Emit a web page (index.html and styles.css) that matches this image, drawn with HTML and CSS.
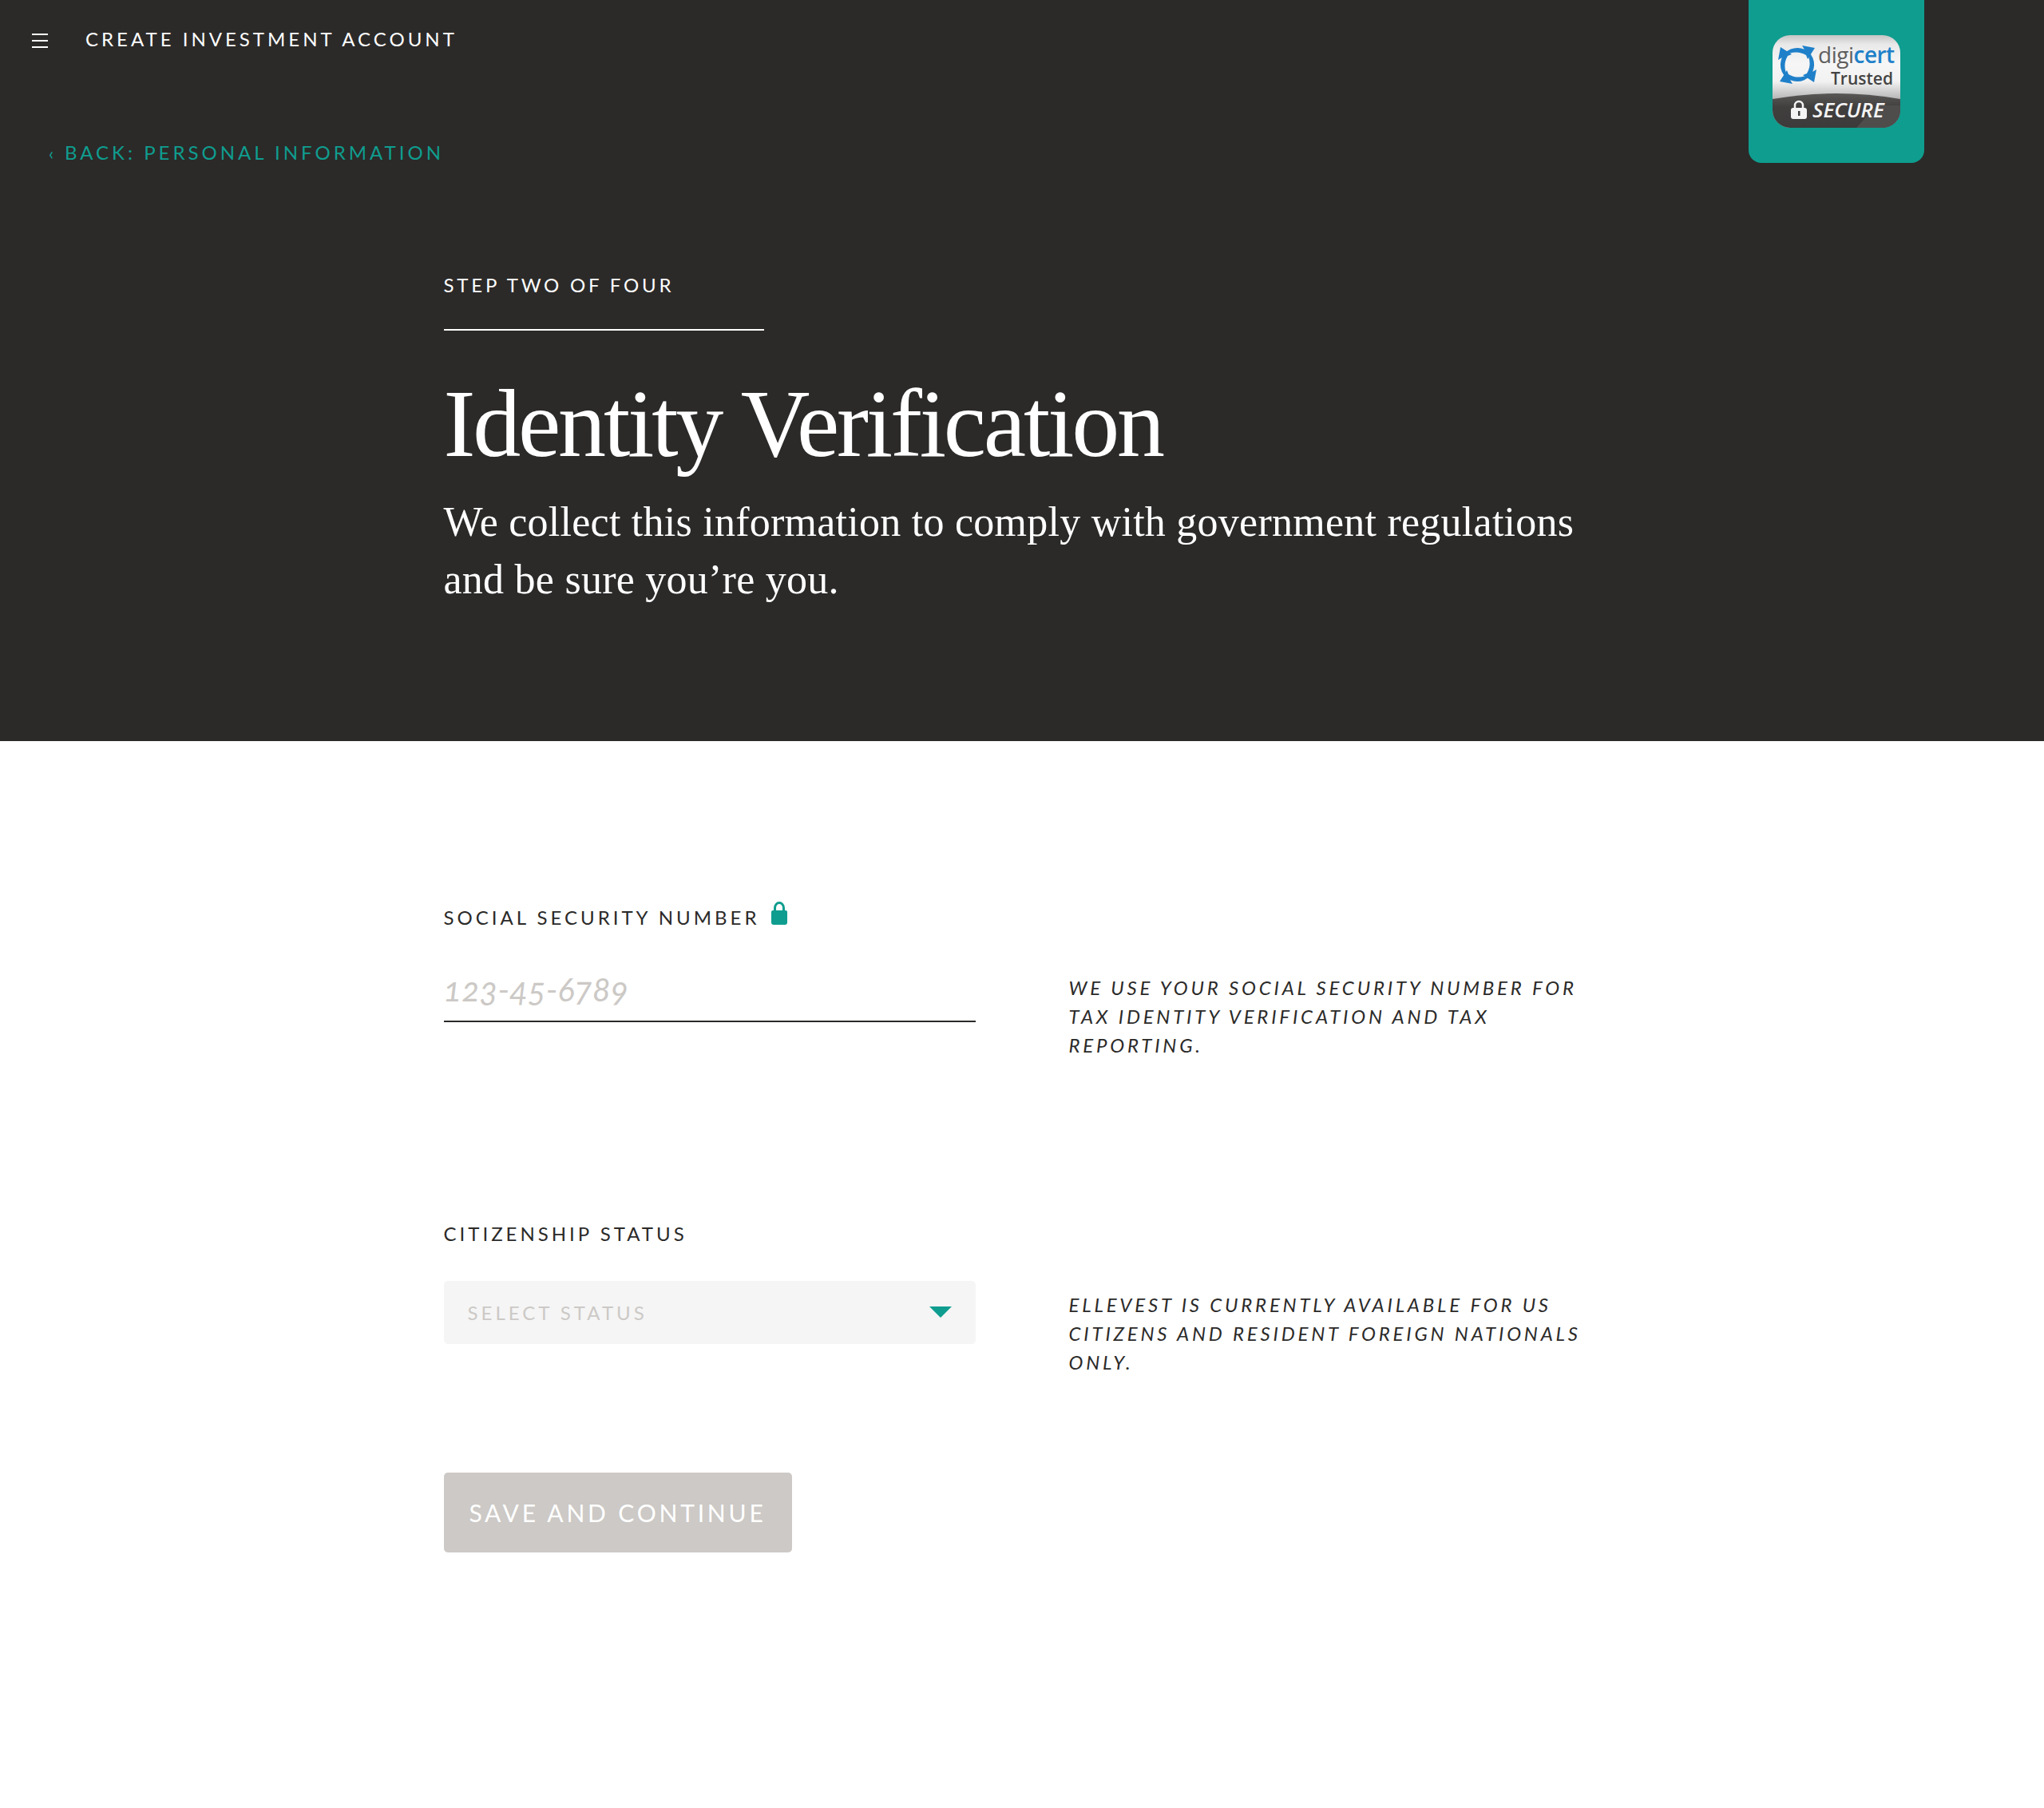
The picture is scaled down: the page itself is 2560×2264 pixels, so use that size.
FILE: index.html
```html
<!DOCTYPE html>
<html lang="en">
<head>
  <meta charset="UTF-8" />
  <title>Create Investment Account</title>
  <link rel="stylesheet" href="styles.css">
</head>
<body>
  <header class="hero">
    <div class="topbar">
      <button class="menu-btn" aria-label="Menu"><span></span><span></span><span></span></button>
      <span class="topbar-title">CREATE INVESTMENT ACCOUNT</span>
    </div>
    <a class="back-link" href="#"><span class="back-arrow">‹</span>BACK: PERSONAL INFORMATION</a>

    <div class="badge">
      <svg class="badge-seal" viewBox="0 0 160 116" width="160" height="116">
        <defs>
          <linearGradient id="sealTop" x1="0" y1="0" x2="0" y2="1">
            <stop offset="0" stop-color="#c4c5c4"/>
            <stop offset="0.1" stop-color="#e9e9e9"/>
            <stop offset="0.3" stop-color="#f6f6f6"/>
            <stop offset="0.5" stop-color="#f2f2f2"/>
            <stop offset="0.68" stop-color="#b9b9b9"/>
          </linearGradient>
          <linearGradient id="sealBand" x1="0" y1="0" x2="0" y2="1">
            <stop offset="0" stop-color="#5a5757"/>
            <stop offset="0.4" stop-color="#413e3e"/>
            <stop offset="1" stop-color="#3c3a3a"/>
          </linearGradient>
          <clipPath id="sealClip"><rect width="160" height="116" rx="22"/></clipPath>
        </defs>
        <g clip-path="url(#sealClip)">
          <rect width="160" height="116" fill="url(#sealTop)"/>
          <path d="M0 80 Q80 66 160 80 V116 H0 Z" fill="url(#sealBand)"/>
          <path d="M105 116 L130 88 H160 V116 Z" fill="#4f4c4c"/>
        </g>
        <g fill="#1f80c9">
          <path id="sealArc" d="M11 30 A21 21 0 0 1 40 18 L37 13 L53 16 L44 30 L42 25 A24 24 0 0 0 11 30 Z"/>
          <use href="#sealArc" transform="rotate(90 31 37)"/>
          <use href="#sealArc" transform="rotate(180 31 37)"/>
          <use href="#sealArc" transform="rotate(270 31 37)"/>
        </g>
        <text class="seal-digi" x="57" y="35">digi<tspan class="seal-cert">cert</tspan></text>
        <text class="seal-trusted" x="73" y="62">Trusted</text>
        <rect x="23" y="91" width="20" height="14" rx="3" fill="#f4f4f4"/>
        <path d="M28 91 V88 A5 5 0 0 1 38 88 V91" fill="none" stroke="#f4f4f4" stroke-width="2.5"/>
        <rect x="32" y="95" width="2.5" height="6" fill="#413e3e"/>
        <text class="seal-secure" x="50" y="103">SECURE</text>
      </svg>
    </div>

    <div class="hero-content">
      <div class="step">STEP TWO OF FOUR</div>
      <h1>Identity Verification</h1>
      <p class="hero-sub">We collect this information to comply with government regulations<br>and be sure you’re you.</p>
    </div>
  </header>

  <main class="form">
    <section class="field">
      <div>
        <label class="field-label" for="ssn">SOCIAL SECURITY NUMBER
          <svg class="lock" viewBox="0 0 20 30" width="20" height="30">
            <path d="M4.5 14 V9 A5.5 6.5 0 0 1 15.5 9 V14" fill="none" stroke="#0f9d8f" stroke-width="3"/>
            <path d="M2 12 H18 A2 2 0 0 1 20 14 V27 A3 3 0 0 1 17 30 H3 A3 3 0 0 1 0 27 V14 A2 2 0 0 1 2 12 Z" fill="#0f9d8f"/>
          </svg>
        </label>
        <input class="text-input" id="ssn" type="text" placeholder="123-45-6789">
      </div>
      <p class="field-note">WE USE YOUR SOCIAL SECURITY NUMBER FOR TAX IDENTITY VERIFICATION AND TAX REPORTING.</p>
    </section>

    <section class="field field-status">
      <div>
        <label class="field-label" for="status">CITIZENSHIP STATUS</label>
        <div class="select-box" id="status">SELECT STATUS</div>
      </div>
      <p class="field-note">ELLEVEST IS CURRENTLY AVAILABLE FOR US CITIZENS AND RESIDENT FOREIGN NATIONALS ONLY.</p>
    </section>

    <button class="save-btn" disabled>SAVE AND CONTINUE</button>
  </main>
</body>
</html>
```

FILE: styles.css
```css
* {
  margin: 0;
  padding: 0;
  box-sizing: border-box;
}

body {
  background-color: #fff;
  color: #2b2a29;
  font-family: "Lato", sans-serif;
  min-height: 2264px;
}

.hero {
  position: relative;
  height: 928px;
  background-color: #2b2a29;
  color: #fff;
}

.topbar {
  display: flex;
  align-items: center;
  height: 97px;
  padding-left: 40px;
}

.menu-btn {
  display: flex;
  flex-direction: column;
  justify-content: space-between;
  width: 20px;
  height: 18px;
  margin: 5px 47px 0 0;
  background: none;
  border: none;
}

.menu-btn span {
  display: block;
  height: 2px;
  background-color: #fff;
}

.topbar-title {
  font-size: 24px;
  letter-spacing: 4px;
}

.back-link {
  display: block;
  margin: 79px 0 0 61px;
  color: #0f9d8f;
  font-size: 24px;
  line-height: 30px;
  letter-spacing: 4px;
  text-decoration: none;
}

.back-arrow {
  display: inline-block;
  width: 20px;
  font-size: 22px;
  letter-spacing: 0;
}

.badge {
  position: absolute;
  top: 0;
  left: 2190px;
  width: 220px;
  height: 204px;
  padding: 44px 30px 0;
  background-color: #0f9d8f;
  border-radius: 0 0 16px 16px;
}

.badge-seal {
  display: block;
}

.seal-digi {
  font-family: "Open Sans", sans-serif;
  font-size: 28px;
  letter-spacing: -0.5px;
  fill: #5f5f5f;
}

.seal-cert {
  font-weight: 600;
  fill: #1f80c9;
}

.seal-trusted {
  font-family: "Open Sans", sans-serif;
  font-size: 21px;
  font-weight: 600;
  fill: #444;
}

.seal-secure {
  font-family: "Open Sans", sans-serif;
  font-size: 26px;
  font-style: italic;
  font-weight: 600;
  fill: #f4f4f4;
}

.hero-content {
  margin: 135px 0 0 555.5px;
}

.step {
  width: 401px;
  padding-bottom: 40px;
  border-bottom: 2px solid #fff;
  font-size: 24px;
  line-height: 30px;
  letter-spacing: 3.8px;
}

h1 {
  margin-top: 52px;
  font-family: "Liberation Serif", serif;
  font-size: 120px;
  font-weight: 400;
  line-height: 130px;
  letter-spacing: -3.2px;
}

.hero-sub {
  margin-top: 22px;
  font-family: "Liberation Serif", serif;
  font-size: 52px;
  line-height: 72px;
  letter-spacing: 0.25px;
}

.form {
  padding: 200px 0 0 555.5px;
}

.field {
  display: grid;
  grid-template-columns: 666px 650px;
  column-gap: 117px;
  align-items: start;
}

.field-status {
  margin-top: 203px;
}

.field-label {
  display: block;
  height: 30px;
  font-size: 24px;
  line-height: 30px;
  letter-spacing: 4px;
}

.lock {
  margin-left: 4px;
  vertical-align: 0;
}

.text-input {
  display: block;
  width: 100%;
  height: 87px;
  margin-top: 35px;
  padding-top: 5px;
  border: none;
  border-bottom: 2px solid #2b2a29;
  outline: none;
  font-family: "Lato", sans-serif;
  font-size: 42px;
  font-style: italic;
  font-variant-numeric: oldstyle-nums;
}

.text-input::placeholder {
  color: #ccc9c6;
  opacity: 1;
}

.select-box {
  position: relative;
  height: 79px;
  margin-top: 44px;
  padding-left: 30px;
  background-color: #f5f5f5;
  border-radius: 5px;
  color: #ccc9c6;
  font-size: 24px;
  line-height: 79px;
  letter-spacing: 4px;
}

.select-box::after {
  content: "";
  position: absolute;
  top: 32px;
  right: 30px;
  border-left: 14px solid transparent;
  border-right: 14px solid transparent;
  border-top: 14px solid #0f9d8f;
}

.field-note {
  padding-top: 91px;
  font-size: 24px;
  font-style: italic;
  line-height: 36px;
  letter-spacing: 3.8px;
}

.field-status .field-note {
  padding-top: 86px;
}

.save-btn {
  display: block;
  width: 436px;
  height: 100px;
  margin-top: 120px;
  background-color: #ccc9c6;
  border: none;
  border-radius: 5px;
  color: #fff;
  font-family: "Lato", sans-serif;
  font-size: 30px;
  letter-spacing: 3.8px;
}
```
